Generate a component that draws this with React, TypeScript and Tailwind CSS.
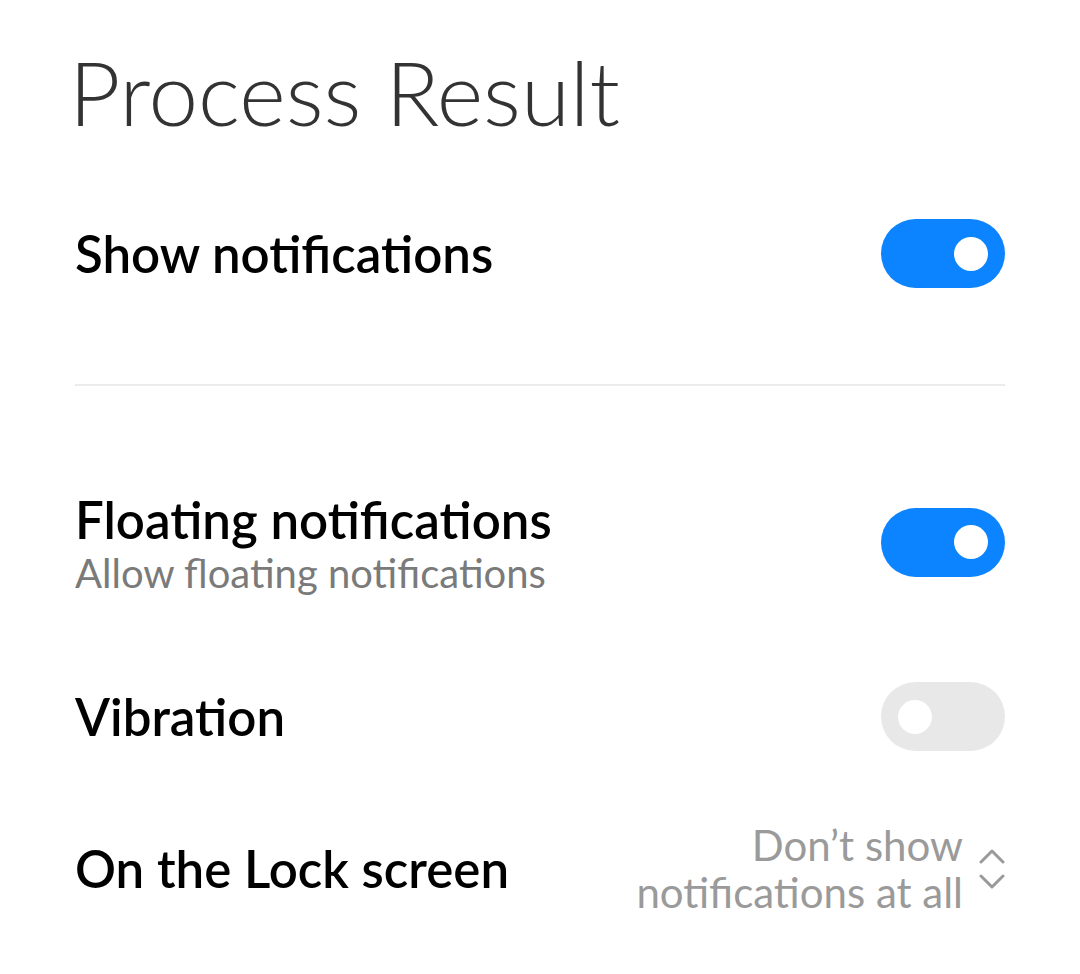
import React from "react";

function Toggle({ on, extra = "" }: { on: boolean; extra?: string }) {
  return (
    <div
      className={
        "flex h-[69px] w-[124px] shrink-0 items-center rounded-full px-[17px] " +
        (on ? "justify-end bg-[#0d84ff] " : "justify-start bg-[#e8e8e8] ") +
        extra
      }
    >
      <div className="h-[34px] w-[34px] rounded-full bg-white" />
    </div>
  );
}

export default function App() {
  return (
    <div
      className="min-h-[974px] w-[1080px] bg-white pl-[75px] pr-[75px]"
      style={{ fontFamily: "Lato, 'Noto Sans', sans-serif" }}
    >
      <div className="pt-[42px]">
        <h1 className="-ml-[6px] text-[89px] font-light leading-[100px] text-[#333333]">
          Process Result
        </h1>
      </div>
      <div className="mt-[77px] flex items-center justify-between">
        <span className="text-[51px] font-semibold leading-[60px] text-black">Show notifications</span>
        <Toggle on />
      </div>
      <div className="mt-[96px] h-[2px] bg-[#ebebeb]" />
      <div className="mt-[106px] flex items-center justify-between">
        <div className="flex flex-col">
          <span className="text-[51px] font-semibold leading-[56px] text-black">
            Floating notifications
          </span>
          <span className="text-[40px] leading-[50px] text-[#7a7a7a]">
            Allow floating notifications
          </span>
        </div>
        <Toggle on extra="mb-[6px]" />
      </div>
      <div className="mt-[84px] flex items-center justify-between">
        <span className="text-[51px] font-semibold leading-[60px] text-black">Vibration</span>
        <Toggle on={false} />
      </div>
      <div className="mt-[71px] flex items-center justify-between">
        <span className="text-[51px] font-semibold leading-[60px] text-black">On the Lock screen</span>
        <div className="flex items-center gap-[16px]">
          <div className="flex flex-col items-end text-[42px] leading-[47px] text-[#9a9a9a]">
            <span>Don’t show</span>
            <span>notifications at all</span>
          </div>
          <svg width="26" height="42" viewBox="0 0 26 42" fill="none" stroke="#9a9a9a" strokeWidth="3" strokeLinecap="round" strokeLinejoin="round">
            <path d="M2 14 L13 3 L24 14" />
            <path d="M2 28 L13 39 L24 28" />
          </svg>
        </div>
      </div>
    </div>
  );
}
